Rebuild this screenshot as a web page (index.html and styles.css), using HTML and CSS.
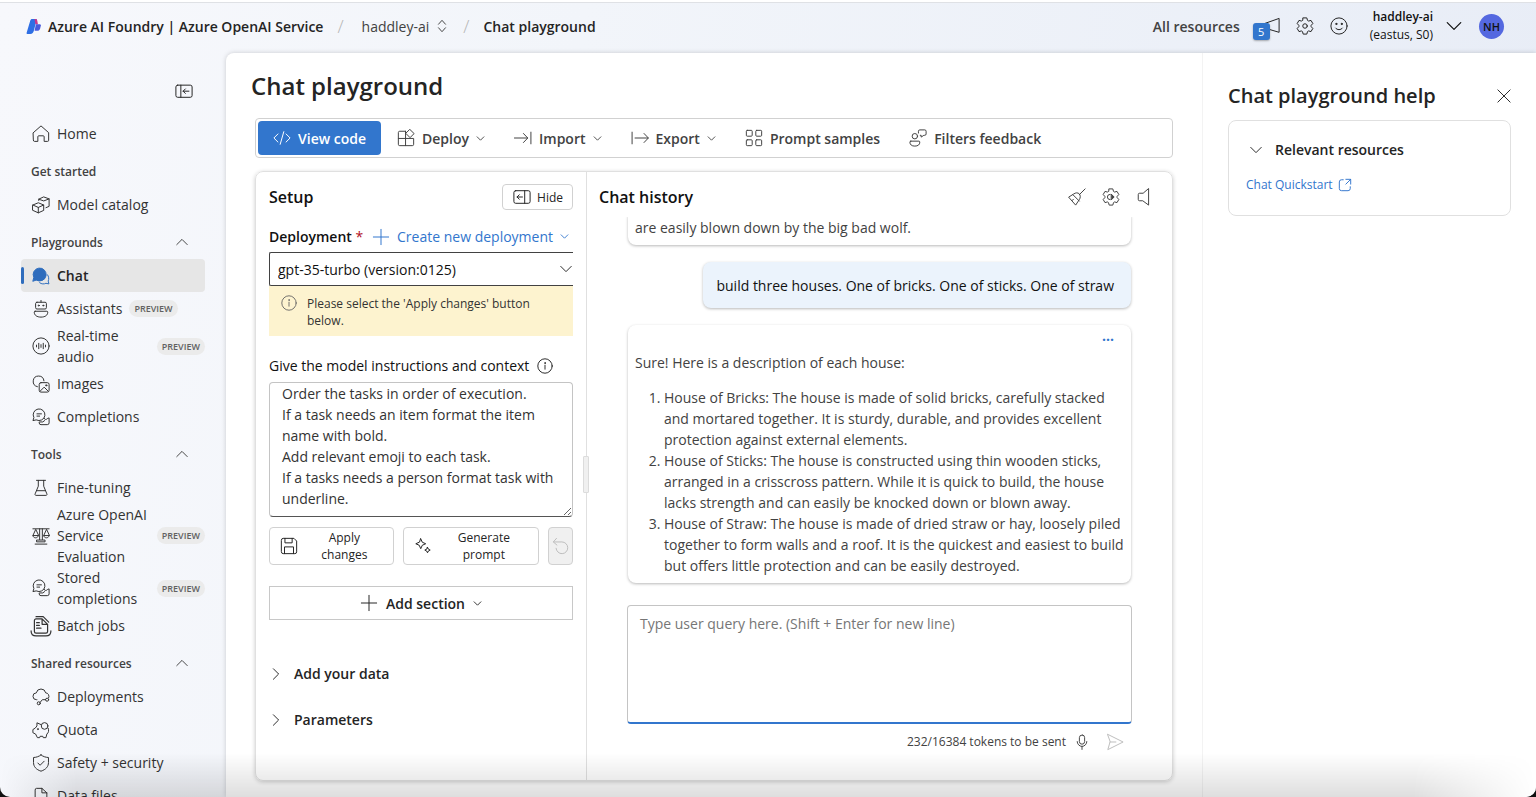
FILE: index.html
```html
<!DOCTYPE html>
<html lang="en">
<head>
<meta charset="utf-8">
<meta name="viewport" content="width=device-width, initial-scale=1">
<title>Chat playground</title>
<link rel="stylesheet" href="styles.css">
</head>
<body>
<svg class="sprite" aria-hidden="true">
  <symbol id="chev-down" viewBox="0 0 16 16"><path d="M2 5l6 6 6-6"/></symbol>
  <symbol id="chev-up" viewBox="0 0 16 16"><path d="M2 11l6-6 6 6"/></symbol>
  <symbol id="chev-right" viewBox="0 0 16 16"><path d="M5 2l6 6-6 6"/></symbol>
  <symbol id="plus" viewBox="0 0 20 20"><path d="M10 1.500v17M1.500 10h17"/></symbol>
  <symbol id="info" viewBox="0 0 20 20"><circle cx="10" cy="10" r="9"/><path d="M10 9v5"/><circle cx="10" cy="6.300" r=".5"/></symbol>
  <symbol id="gear" viewBox="0 0 20 20"><path d="M8 1h4l.8 2.800L14 4.500l2.700-.7 2 3.500-1.900 2v1.400l1.900 2-2 3.500-2.700-.7-1.200.7L12 19H8l-.8-2.800L6 15.500l-2.700.7-2-3.500 1.900-2V9.300l-1.900-2 2-3.500L6 4.500l1.200-.7z"/></symbol>
  <symbol id="completions" viewBox="0 0 20 20"><path d="M1.200 13.600l.9-3A6.500 6.500 0 1 1 5 13.400z"/><path d="M5.500 6.500h5M5.500 9h3"/><path d="M13.500 11.500c.5 1.500 2 2 4 0l1.500-.5v5.500a2 2 0 0 1-2 2H10a2 2 0 0 1-2-2v-1h4l2-1.500"/></symbol>
</svg>
<div class="app">
  <header class="topbar">
    <a class="brand" href="#">
      <svg class="brand-logo" viewBox="0 0 16 18"><path fill="#2f6fe4" d="M6 1h5l-3 12c-.6 2.500-1.700 4-4 4H1.200C.4 17 0 16.400.2 15.600L4 3c.4-1.300 1-2 2-2z"/><path fill="#c9388b" d="M8.500 1H10c1 0 1.300 1 1.500 2l.7 3.500H9.500z"/><path fill="#4a5bdc" d="M10 6.500h4c.8 0 1.300.6 1.300 1.400L14.500 11c-.5 1.500-1.500 2.500-3 2.500H8.600z"/></svg>
      Azure AI Foundry | Azure OpenAI Service</a>
    <span class="slash">/</span>
    <button class="project">haddley-ai
      <svg class="icon" viewBox="0 0 16 16"><path d="M4 6l4-4.500L12 6M4 10l4 4.500 4-4.500"/></svg></button>
    <span class="slash">/</span>
    <span class="crumb">Chat playground</span>
    <div class="top-actions">
      <a class="all-resources" href="#">All resources</a>
      <button class="icon-btn news" aria-label="Announcements">
        <svg class="icon icon-lg" viewBox="0 0 20 20"><path d="M19 2v15L2 12V8z"/></svg>
        <span class="count">5</span></button>
      <button class="icon-btn" aria-label="Settings"><svg class="icon icon-lg" viewBox="0 0 20 20"><use href="#gear"/><circle cx="10" cy="10" r="2.500"/></svg></button>
      <button class="icon-btn" aria-label="Feedback"><svg class="icon icon-lg" viewBox="0 0 20 20"><circle cx="10" cy="10" r="9"/><path d="M6.200 12.300c1.800 2.400 5.800 2.400 7.600 0"/><circle cx="7" cy="7.700" r=".7" fill="currentColor"/><circle cx="13" cy="7.700" r=".7" fill="currentColor"/></svg></button>
      <button class="account"><span class="account-text"><b>haddley-ai</b><span>(eastus, S0)</span></span>
        <svg class="icon icon-lg"><use href="#chev-down"/></svg></button>
      <button class="avatar">NH</button>
    </div>
  </header>

  <div class="body">
    <nav class="sidebar" aria-label="Main">
      <button class="collapse" aria-label="Collapse navigation"><svg class="icon icon-lg" viewBox="0 0 20 20"><rect x="1" y="3.500" width="18" height="13.500" rx="2"/><path d="M6.500 3.500V17M15.500 10.200H9M11.500 7.700L9 10.200l2.500 2.500"/></svg></button>
      <a class="nav-item" href="#"><svg class="icon icon-lg" viewBox="0 0 20 20"><path d="M1.500 8.500L10 1l8.500 7.500V17a1.200 1.200 0 0 1-1.200 1.200H13.500V13a1 1 0 0 0-1-1h-5a1 1 0 0 0-1 1v5.200H2.700A1.200 1.200 0 0 1 1.500 17z"/></svg><span>Home</span></a>
      <h2 class="nav-head">Get started</h2>
      <a class="nav-item" href="#"><svg class="icon icon-lg" viewBox="0 0 20 20"><path d="M1 10l6-2.500 6 2.500v6L7 18.700 1 16zM1 10l6 2.700 6-2.700M7 12.700v6M7.500 5V3.500L13 1l6 2.200v8.300L15.500 13M7.500 3.500l5.500 2 6-2.300"/></svg><span>Model catalog</span></a>
      <h2 class="nav-head">Playgrounds<svg class="icon"><use href="#chev-up"/></svg></h2>
      <a class="nav-item selected" href="#" aria-current="page"><svg class="icon icon-lg" viewBox="0 0 20 20"><path fill="currentColor" d="M1 15.500l1-4A7.200 7.200 0 1 1 5 14.700z"/><path d="M8.500 17.500c2.200 1.700 5 1.600 7 .6l3.300.7-.8-3.200c1-2.200.8-5-.8-7"/></svg><span>Chat</span></a>
      <a class="nav-item" href="#"><svg class="icon icon-lg" viewBox="0 0 20 20"><path d="M10 .5v2"/><rect x="4" y="2.500" width="12" height="7.500" rx="1.500"/><path d="M3.500 12.500h13a1 1 0 0 1 1 1c0 3.500-3 5.500-7.500 5.500s-7.500-2-7.500-5.500a1 1 0 0 1 1-1z"/><circle cx="7.500" cy="6.200" r=".6"/><circle cx="12.500" cy="6.200" r=".6"/></svg><span>Assistants</span><em class="tag">PREVIEW</em></a>
      <a class="nav-item" href="#"><svg class="icon icon-lg" viewBox="0 0 20 20"><circle cx="10" cy="10" r="9"/><path d="M5 9v2M7.500 7v6M10 8.500v3M12.500 7v6M15 9v2"/></svg><span>Real-time audio</span><em class="tag tag-end">PREVIEW</em></a>
      <a class="nav-item" href="#"><svg class="icon icon-lg" viewBox="0 0 20 20"><path d="M6 13a6 6 0 1 1 7.300-6.500"/><rect x="8" y="8.500" width="11" height="10.500" rx="2"/><path d="M9 18l4.500-4.500L18 18"/><circle cx="15.800" cy="11.500" r=".7"/></svg><span>Images</span></a>
      <a class="nav-item" href="#"><svg class="icon icon-lg"><use href="#completions"/></svg><span>Completions</span></a>
      <h2 class="nav-head">Tools<svg class="icon"><use href="#chev-up"/></svg></h2>
      <a class="nav-item" href="#"><svg class="icon icon-lg" viewBox="0 0 20 20"><path d="M5 1.500h10M7 1.500V8l-3.500 8.500c-.4.900 0 1.700 1 1.700h11c1 0 1.400-.8 1-1.700L13 8V1.500M5.400 13h9.200"/></svg><span>Fine-tuning</span></a>
      <a class="nav-item" href="#"><svg class="icon icon-lg" viewBox="0 0 20 20"><path d="M1 2h18M8.500 2v12M11.500 2v12M4 3L1 9.500h6zM16 3l-3 6.500h6zM1 9.500c0 3.500 6 3.500 6 0M13 9.500c0 3.500 6 3.500 6 0M5.500 14.500h9v2h-9zM3.500 19h13"/></svg><span>Azure OpenAI Service Evaluation</span><em class="tag tag-end">PREVIEW</em></a>
      <a class="nav-item" href="#"><svg class="icon icon-lg"><use href="#completions"/></svg><span>Stored completions</span><em class="tag tag-end">PREVIEW</em></a>
      <a class="nav-item" href="#"><svg class="icon icon-xl" viewBox="0 0 20 20"><path d="M4 5a1.500 1.500 0 0 1 1.500-1.500H11l5 5V15a1.500 1.500 0 0 1-1.500 1.500h-9A1.500 1.500 0 0 1 4 15zM11 3.500v5h5M6 7h2.500M6 9.500h2.500M6 12h4M5.500 1.500H12L17 6.500M1 14.500c0 3 1.500 4.500 4.500 4.500h9c3 0 4.500-1.500 4.500-4.500"/></svg><span>Batch jobs</span></a>
      <h2 class="nav-head">Shared resources<svg class="icon"><use href="#chev-up"/></svg></h2>
      <a class="nav-item" href="#"><svg class="icon icon-lg" viewBox="0 0 20 20"><path d="M5.500 13H5a3.800 3.800 0 0 1-.2-7.600 5.300 5.300 0 0 1 10.400 0A3.800 3.800 0 0 1 18.500 11"/><circle cx="7.500" cy="17" r="1.700"/><circle cx="16.800" cy="13" r="1.700"/><path d="M9 16l2.500-3h3.600"/></svg><span>Deployments</span></a>
      <a class="nav-item" href="#"><svg class="icon icon-lg" viewBox="0 0 20 20"><path d="M10 4L5.500 2v3.500L3.500 8 1 9.500V13l3 1.500 2 4h2.500l.5-1.500h3l.5 1.500h3l1-4c2-1.500 2.500-4 1.500-6.500"/><circle cx="14" cy="5.500" r="3.700"/><circle cx="6.500" cy="9" r=".5"/></svg><span>Quota</span></a>
      <a class="nav-item" href="#"><svg class="icon icon-lg" viewBox="0 0 20 20"><path d="M10 1c2.200 1.800 5 2.700 8.300 2.900v5.600c0 4.500-2.800 7.700-8.300 9.600-5.500-1.900-8.300-5.100-8.300-9.600V3.900C5 3.700 7.800 2.800 10 1zM6.500 10l2.500 2.500L13.500 8"/></svg><span>Safety + security</span></a>
      <a class="nav-item" href="#"><svg class="icon icon-lg" viewBox="0 0 20 20"><path d="M3.500 3A1.500 1.500 0 0 1 5 1.500h6l5.500 5V17a1.500 1.500 0 0 1-1.500 1.500H5A1.500 1.500 0 0 1 3.500 17zM11 1.500v5h5.500"/></svg><span>Data files</span></a>
    </nav>

    <div class="page">
      <main class="main">
        <h1 class="title">Chat playground</h1>
        <div class="toolbar" role="toolbar">
          <button class="tool primary"><svg class="icon icon-lg" viewBox="0 0 20 20"><path d="M5.500 5.500L1 10l4.500 4.500M14.500 5.500L19 10l-4.500 4.500M12 3L8 17"/></svg>View code</button>
          <button class="tool"><svg class="icon icon-lg" viewBox="0 0 20 20"><path d="M9.500 2.500H3A1.500 1.500 0 0 0 1.500 4v13A1.500 1.500 0 0 0 3 18.500h14a1.500 1.500 0 0 0 1.500-1.500v-6.500h-17M9.500 2.500v16"/><path d="M14.500.700l4.500 4.400-4.500 4.500L10 5.100z"/></svg>Deploy<svg class="icon icon-sm"><use href="#chev-down"/></svg></button>
          <button class="tool"><svg class="icon icon-lg" viewBox="0 0 20 20"><path d="M.5 10H15M10.500 5l4.800 5-4.800 5M18.800 3.500v13"/></svg>Import<svg class="icon icon-sm"><use href="#chev-down"/></svg></button>
          <button class="tool"><svg class="icon icon-lg" viewBox="0 0 20 20"><path d="M4.500 10H19M14.500 5l4.800 5-4.800 5M1.200 3.500v13"/></svg>Export<svg class="icon icon-sm"><use href="#chev-down"/></svg></button>
          <button class="tool"><svg class="icon icon-lg" viewBox="0 0 20 20"><rect x="1.500" y="1.500" width="6.500" height="6.500" rx="1"/><rect x="12" y="1.500" width="6.500" height="6.500" rx="1"/><rect x="1.500" y="12" width="6.500" height="6.500" rx="1"/><rect x="12" y="12" width="6.500" height="6.500" rx="1"/></svg>Prompt samples</button>
          <button class="tool"><svg class="icon icon-lg" viewBox="0 0 20 20"><circle cx="6.500" cy="8" r="3"/><path d="M2 13.500h9a1 1 0 0 1 1 1c0 3-2 4.500-5.500 4.500S1 17.500 1 14.500a1 1 0 0 1 1-1zM10.500 4.500v-2A1.500 1.500 0 0 1 12 1h5.500A1.500 1.500 0 0 1 19 2.500v3A1.500 1.500 0 0 1 17.500 7h-1L13.500 9V7h-1"/></svg>Filters feedback</button>
        </div>

        <div class="workspace">
          <section class="setup" aria-label="Setup">
            <div class="setup-head"><h2 class="panel-title">Setup</h2>
              <button class="hide"><svg class="icon icon-lg" viewBox="0 0 20 20"><rect x="1" y="3" width="18" height="14" rx="2"/><path d="M13 3v14M10.500 10h-6M7 7.500L4.500 10 7 12.500"/></svg>Hide</button></div>
            <div class="deploy-row"><label for="deployment"><b>Deployment</b> <span class="req">*</span></label>
              <button class="create"><svg class="icon icon-lg"><use href="#plus"/></svg>Create new deployment<svg class="icon icon-sm"><use href="#chev-down"/></svg></button></div>
            <div class="select-wrap"><select id="deployment" class="select"><option>gpt-35-turbo (version:0125)</option></select><svg class="icon"><use href="#chev-down"/></svg></div>
            <div class="warning"><svg class="icon"><use href="#info"/></svg><p>Please select the 'Apply changes' button below.</p></div>
            <div class="instr-label"><label for="instructions">Give the model instructions and context</label><svg class="icon"><use href="#info"/></svg></div>
            <textarea id="instructions" class="instructions">Order the tasks in order of execution.
If a task needs an item format the item name with bold.
Add relevant emoji to each task.
If a tasks needs a person format task with underline.</textarea>
            <div class="setup-actions">
              <button class="action apply"><svg class="icon icon-lg" viewBox="0 0 20 20"><path d="M1.500 3.500a2 2 0 0 1 2-2h12l3 3v12a2 2 0 0 1-2 2h-13a2 2 0 0 1-2-2zM5.500 1.500v5h8v-5M5 18.500V11h10v7.500"/></svg><span>Apply changes</span></button>
              <button class="action generate"><svg class="icon icon-lg" viewBox="0 0 20 20"><path d="M7.500 2l1.700 3.800L13 7.500 9.200 9.200 7.500 13 5.800 9.200 2 7.500l3.800-1.700zM15 11.500l1 2 2 1-2 1-1 2-1-2-2-1 2-1z"/></svg><span>Generate prompt</span></button>
              <button class="action undo" disabled aria-label="Undo"><svg class="icon icon-lg" viewBox="0 0 20 20"><path d="M5 1.500L1.500 5.500l4 3.500M1.500 5.500H11a6.500 6.500 0 1 1-6.500 7"/></svg></button>
            </div>
            <button class="add-section"><svg class="icon icon-lg"><use href="#plus"/></svg>Add section<svg class="icon icon-sm"><use href="#chev-down"/></svg></button>
            <div class="folds">
              <button class="fold"><svg class="icon"><use href="#chev-right"/></svg>Add your data</button>
              <button class="fold"><svg class="icon"><use href="#chev-right"/></svg>Parameters</button>
            </div>
          </section>
          <div class="splitter" role="separator"><span class="grip"></span></div>
          <section class="chat" aria-label="Chat history">
            <div class="chat-head"><h2 class="panel-title">Chat history</h2>
              <button class="icon-btn" aria-label="Clear chat"><svg class="icon icon-lg" viewBox="0 0 20 20"><path d="M19 1l-6.500 6.500M6.500 6.500c2-1.500 4.500-1.500 6 0s1.500 4.500 0 6.500L8.500 19 1 10.500zM5.500 7.500l7 7"/><path d="M4.500 14L6 12.500"/></svg></button>
              <button class="icon-btn" aria-label="Chat settings"><svg class="icon icon-lg" viewBox="0 0 20 20"><use href="#gear"/><path fill="currentColor" d="M10.500 7l3 3-3 3z"/><path d="M9 7a3 3 0 0 0 0 6"/></svg></button>
              <button class="icon-btn" aria-label="Speaker"><svg class="icon icon-lg" viewBox="0 0 20 20"><path d="M14 1v18L7.500 14.200H4a1.500 1.500 0 0 1-1.500-1.500V7.300A1.500 1.500 0 0 1 4 5.800h3.500z"/></svg></button></div>
            <div class="messages">
              <div class="reply">are easily blown down by the big bad wolf.</div>
              <div class="user">build three houses. One of bricks. One of sticks. One of straw</div>
              <div class="reply">
                <button class="more" aria-label="More options">···</button>
                <p>Sure! Here is a description of each house:</p>
                <ol>
                  <li>House of Bricks: The house is made of solid bricks, carefully stacked and mortared together. It is sturdy, durable, and provides excellent protection against external elements.</li>
                  <li>House of Sticks: The house is constructed using thin wooden sticks, arranged in a crisscross pattern. While it is quick to build, the house lacks strength and can easily be knocked down or blown away.</li>
                  <li>House of Straw: The house is made of dried straw or hay, loosely piled together to form walls and a roof. It is the quickest and easiest to build but offers little protection and can be easily destroyed.</li>
                </ol>
              </div>
            </div>
            <textarea class="query" aria-label="User query" placeholder="Type user query here. (Shift + Enter for new line)"></textarea>
            <div class="chat-foot"><span>232/16384 tokens to be sent</span>
              <button class="icon-btn" aria-label="Dictate"><svg class="icon" viewBox="0 0 16 18"><rect x="5" y="1" width="6" height="10.500" rx="3"/><path d="M2.500 8.500a5.500 5.500 0 0 0 11 0M8 14v3.500"/></svg></button>
              <button class="icon-btn send" aria-label="Send"><svg class="icon icon-lg" viewBox="0 0 20 20"><path d="M2 1.500l17 8.500L2 18.500 4.500 10zM4.500 10H11"/></svg></button></div>
          </section>
        </div>
      </main>
      <aside class="help">
        <div class="help-head"><h2>Chat playground help</h2><button class="icon-btn" aria-label="Close"><svg class="icon" viewBox="0 0 16 16"><path d="M1 1l14 14M15 1L1 15"/></svg></button></div>
        <div class="card">
          <button class="card-head"><svg class="icon"><use href="#chev-down"/></svg>Relevant resources</button>
          <a class="quick" href="#">Chat Quickstart<svg class="icon" viewBox="0 0 16 16"><path d="M6 2H4a2.500 2.500 0 0 0-2.500 2.500V12A2.500 2.500 0 0 0 4 14.500h7.500A2.500 2.500 0 0 0 14 12v-2M9 1.500h5.500V7M14.500 1.500L9 7"/></svg></a>
        </div>
      </aside>
    </div>
  </div>
</div>
</body>
</html>
```
FILE: styles.css
```css
* { box-sizing: border-box; }
body {
  margin: 0;
  background: #111;
  color: #242424;
  font: 14px/21px "Open Sans", "Noto Sans", sans-serif;
}
h1, h2, p { margin: 0; }
b { font-weight: 600; }
a { color: inherit; text-decoration: none; }
button { margin: 0; padding: 0; border: 0; background: none; color: inherit; font: inherit; }
.sprite { position: absolute; width: 0; height: 0; }
.icon { flex: none; width: 14px; height: 14px; fill: none; stroke: currentColor; stroke-width: 1.1; stroke-linejoin: round; stroke-linecap: round; }
.icon-lg { width: 18px; height: 18px; }
.icon-xl { width: 22px; height: 22px; }
.icon-sm { width: 9px; height: 9px; stroke-width: 1.6; }
.icon-btn { position: relative; display: flex; align-items: center; }

.app {
  position: relative;
  display: flex;
  flex-direction: column;
  height: 100vh;
  overflow: hidden;
  border-top: 2px solid #fff;
  border-radius: 0 0 10px 10px;
  background: linear-gradient(100deg, #f7f8fc 0%, #f2f5fa 35%, #e7ecf6 100%);
}
.app::after {
  content: "";
  position: absolute;
  inset: auto 0 0;
  height: 44px;
  background: linear-gradient(transparent, rgb(0 0 0 / 13%));
  mask-image: linear-gradient(90deg, transparent, #000 5%, #000 92%, transparent);
  pointer-events: none;
}

.topbar { display: flex; flex: none; align-items: center; height: 51px; padding: 0 32px 4px 26px; border-top: 1px solid #dfe1e5; }
.brand { display: flex; align-items: center; gap: 6px; font-weight: 600; }
.brand-logo { width: 16px; height: 17px; }
.slash { padding: 0 14px; color: #b5b5b5; font-size: 18px; font-weight: 300; }
.project { display: flex; align-items: center; gap: 6px; padding-left: 4px; color: #424242; }
.crumb { font-weight: 600; }
.top-actions { display: flex; align-items: center; gap: 16px; margin-left: auto; }
.all-resources { color: #424242; font-weight: 600; }
.news { margin-left: 6px; }
.count {
  position: absolute;
  left: -9px;
  top: -1px;
  width: 17px;
  height: 17px;
  margin-top: 7px;
  border-radius: 3px;
  background: #3276cd;
  box-shadow: 0 1px 2px rgb(0 0 0 / 30%);
  color: #fff;
  font-size: 11px;
  line-height: 17px;
}
.account { display: flex; align-items: center; gap: 12px; margin-left: 6px; color: #111; }
.account-text { display: flex; flex-direction: column; align-items: flex-end; font-size: 12px; line-height: 18px; }
.avatar { width: 25px; height: 25px; border-radius: 50%; background: #5468e0; color: #111; font-size: 11px; font-weight: 600; line-height: 25px; }

.body { display: flex; flex: 1; min-height: 0; }
.sidebar { display: flex; flex: 0 0 226px; flex-direction: column; overflow: hidden; padding: 29px 21px 0; }
.collapse { display: flex; align-self: flex-end; margin: 0 12px 17px 0; }
.nav-item { position: relative; display: flex; flex: none; align-items: center; gap: 7px; min-height: 33px; padding-left: 11px; border-radius: 4px; color: #333; }
.nav-item .icon-xl { margin: 0 -2px; }
.nav-item.selected { background: #e6e6e6; color: #242424; font-weight: 600; }
.nav-item.selected .icon { color: #2f6dbd; }
.nav-item.selected::before { content: ""; position: absolute; left: 0; top: 8px; bottom: 8px; width: 3px; border-radius: 2px; background: #2f6dbd; }
.nav-head { display: flex; flex: none; align-items: center; justify-content: space-between; height: 38px; padding: 4px 16px 0 10px; color: #424242; font-size: 12px; font-weight: 600; }
.tag { padding: 0 5px; border-radius: 9px; background: #ebebeb; color: #616161; font-size: 9px; font-style: normal; font-weight: 600; line-height: 17px; }
.tag-end { margin-left: auto; }

.page { display: flex; flex: 1; min-width: 0; border-top-left-radius: 8px; background: #fff; box-shadow: 0 0 5px rgb(0 0 0 / 18%); }
.main { display: flex; flex: 1; flex-direction: column; min-width: 0; padding: 15px 29px 16px; border-right: 1px solid #f3f3f3; }
.title { margin-left: -4px; font-size: 24px; font-weight: 600; line-height: 36px; }
.toolbar { display: flex; flex: none; gap: 3px; margin-top: 14px; padding: 2px; border: 1px solid #d1d1d1; border-radius: 4px; }
.tool { display: flex; align-items: center; gap: 7px; height: 34px; padding: 0 13px; border-radius: 4px; color: #424242; font-weight: 600; white-space: nowrap; }
.tool.primary { padding: 0 15px; background: #3276cd; color: #fff; }

.workspace { display: flex; flex: 1; min-height: 0; margin-top: 13px; border: 1px solid #e0e0e0; border-radius: 8px; box-shadow: 0 1px 4px rgb(0 0 0 / 20%); }
.panel-title { color: #111; font-size: 16px; font-weight: 600; line-height: 22px; }
.setup { flex: 0 0 330px; padding: 12px 13px 0; }
.setup-head { display: flex; align-items: center; justify-content: space-between; }
.hide { display: flex; align-items: center; gap: 6px; height: 26px; padding: 0 9px 0 10px; border: 1px solid #d1d1d1; border-radius: 4px; font-size: 12px; }
.deploy-row { display: flex; align-items: center; justify-content: space-between; margin: 16px 4px 5px 0; color: #111; }
.req { color: #b10e1c; }
.create { display: flex; align-items: center; gap: 7px; color: #3276cd; }
.select-wrap { position: relative; }
.select { display: block; width: 100%; height: 34px; padding: 0 8px; border: 1px solid #424242; border-right: 0; border-radius: 2px 0 0 2px; appearance: none; background: #fff; color: #111; font: inherit; }
.select-wrap .icon { position: absolute; right: 0; top: 10px; }
.warning { display: flex; gap: 10px; height: 50px; padding: 9px 39px 0 12px; background: #fdf3cf; color: #333; font-size: 12px; line-height: 17px; }
.warning .icon, .instr-label .icon { width: 16px; height: 16px; }
.warning .icon { color: #616161; }
.instr-label { display: flex; align-items: center; gap: 8px; margin: 19px 0 6px; color: #111; }
.instructions { display: block; width: 100%; height: 135px; padding: 0 12px; overflow: hidden; border: 1px solid #c4c4c4; border-bottom-color: #555; border-radius: 4px; resize: vertical; color: #333; font: inherit; }
.setup-actions { display: flex; gap: 9px; margin-top: 10px; }
.action { display: flex; align-items: center; height: 38px; padding: 0 10px; border: 1px solid #d1d1d1; border-radius: 4px; font-size: 12px; line-height: 17px; }
.action span { flex: 1; padding: 0 8px 0 16px; }
.apply { flex: 124; }
.generate { flex: 138; }
.undo { justify-content: center; width: 25px; padding: 0; background: #f0f0f0; color: #bdbdbd; }
.add-section { display: flex; align-items: center; justify-content: center; gap: 8px; width: 100%; height: 34px; margin-top: 21px; border: 1px solid #c8c8c8; font-weight: 600; }
.folds { display: grid; gap: 25px; margin-top: 43px; }
.fold { display: flex; align-items: center; gap: 11px; font-weight: 600; }

.splitter { position: relative; flex: none; width: 1px; background: #e0e0e0; }
.grip { position: absolute; left: -3px; top: 284px; width: 6px; height: 37px; border: 1px solid #dcdcdc; border-radius: 1px; background: #f0f0f0; }
.chat { display: flex; flex: 1; flex-direction: column; min-width: 0; }
.chat-head { display: flex; flex: none; align-items: center; gap: 16px; height: 45px; padding: 4px 18px 0 12px; color: #424242; }
.chat-head .panel-title { margin-right: auto; }
.messages { display: flex; flex: 1; flex-direction: column; justify-content: flex-end; gap: 17px; min-height: 0; overflow: hidden; padding: 0 41px 22px; }
.reply { flex: none; position: relative; padding: 7px 3px 7px 7px; border-radius: 8px; box-shadow: 0 1px 3px rgb(0 0 0 / 28%); color: #424242; }
.reply p { padding-top: 20px; }
.reply ol { margin: 14px 0 0; padding-left: 29px; }
.more { position: absolute; right: 17px; top: 4px; color: #3276cd; font-weight: 700; }
.user { flex: none; align-self: flex-end; padding: 13px 17px 12px 13px; border-radius: 8px; background: #ebf3fc; box-shadow: 0 1px 3px rgb(0 0 0 / 28%); color: #111; }
.query { display: block; flex: none; height: 119px; margin: 0 40px; padding: 7px 12px; border: 1px solid #c4c4c4; border-bottom: 2px solid #3276cd; border-radius: 4px; resize: none; font: inherit; }
.query::placeholder { color: #767676; }
.chat-foot { display: flex; flex: none; align-items: center; justify-content: flex-end; gap: 9px; height: 56px; padding: 0 48px 21px; color: #424242; font-size: 12px; }
.chat-foot .icon { height: 18px; }
.send { margin-left: 8px; color: #bdbdbd; }

.help { flex: 0 0 333px; padding: 28px 25px 0; }
.help-head { display: flex; align-items: center; justify-content: space-between; }
.help-head h2 { font-size: 20px; font-weight: 600; line-height: 30px; }
.card { margin-top: 9px; padding: 18px 17px 20px; border: 1px solid #e0e0e0; border-radius: 8px; }
.card-head { display: flex; align-items: center; gap: 12px; padding-left: 3px; font-weight: 600; }
.quick { display: flex; align-items: center; gap: 5px; margin-top: 14px; color: #3276cd; font-size: 12px; }
```
